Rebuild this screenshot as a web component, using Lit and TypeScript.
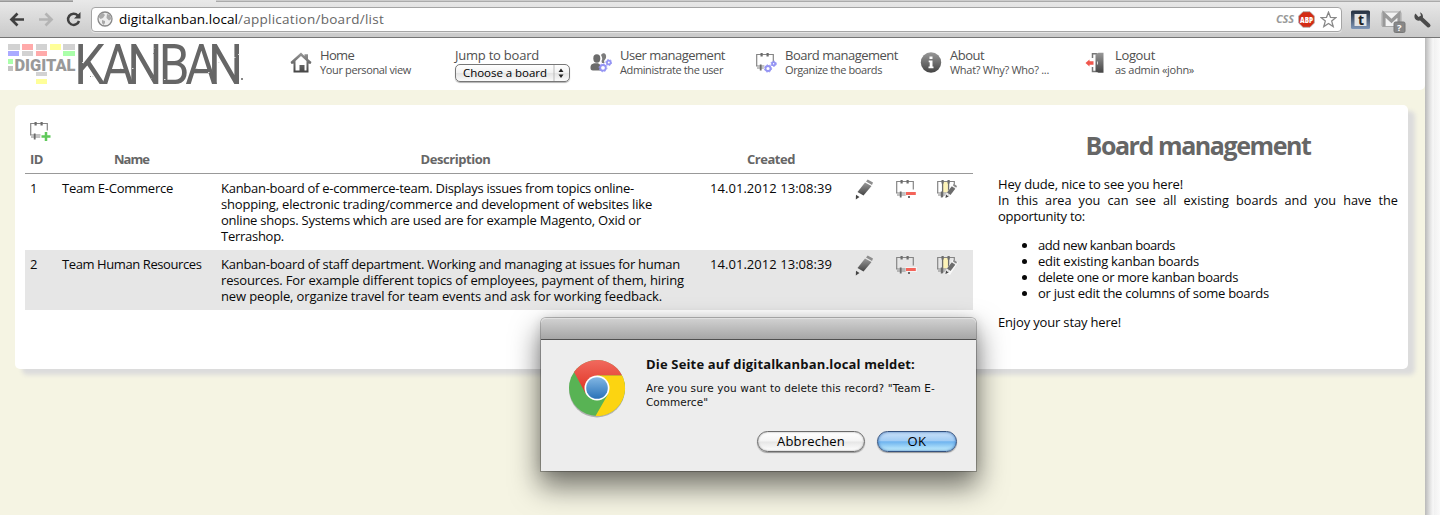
import { LitElement, html, svg, css, nothing } from "lit";
import { customElement, property } from "lit/decorators.js";

/** One line of text, tracked so that it fills a given measure. */
@customElement("fit-line")
class FitLine extends LitElement {
  @property({ type: Number }) w = 0;
  @property() text = "";
  static styles = css`
    :host { display: inline-block; white-space: pre; }
    span { display: inline-block; }
  `;
  updated() {
    const el = this.renderRoot.querySelector("span") as HTMLElement;
    el.style.letterSpacing = "0px";
    const natural = el.getBoundingClientRect().width;
    if (this.w) el.style.letterSpacing = (this.w - natural) / this.text.length + "px";
  }
  render() {
    return html`<span>${this.text}</span>`;
  }
}

const line = (text: string, w: number) => html`<fit-line .text=${text} .w=${w}></fit-line>`;

const boardBase = svg`
  <path d="M1.700 14.500V3.500H18.300V11.500M1 15H12.500M2 17H11.500" fill="none" stroke="#858585" stroke-width="1.200"/>
  <path d="M5.500 2h2.200v3.600H5.500zM11.500 2h2.200v3.600h-2.200zM4.800 13.500h1.800v6H4.800z" fill="#6c6c6c"/>`;

const gear = (x: number, y: number, r: number) => svg`
  <circle cx=${x} cy=${y} r=${r} fill="#fff" stroke="#9494f4" stroke-width="1.800"/>
  <circle cx=${x} cy=${y} r=${r + 1.1} fill="none" stroke="#9494f4" stroke-width="1" stroke-dasharray="1.500 1.500"/>`;

const gradient = svg`<defs><linearGradient id="g" x1="0" y1="0" x2="0" y2="1">
  <stop offset="0" stop-color="#999"/><stop offset="1" stop-color="#444"/></linearGradient></defs>`;

const icons: Record<string, unknown> = {
  home: svg`${gradient}<path fill="url(#g)" fill-rule="evenodd" d="M11 0.500 14.500 4V2.300H18V7L21.500 10 20.500 12 18.500 11.500V20.500H3.500V11.500L1.500 12 .5 10ZM11 4 5.500 9V18.500H9.500V13H14.500V18.500H16.500V9Z"/>`,
  user: svg`<ellipse cx="6.800" cy="6.500" rx="3.500" ry="4.200" fill="#6c6c6c"/><path d="M.5 16C.5 12.500 2 11.500 6 11.300 10 11 11 13 11 18.500H3C1 18.500 .5 17.500 .5 16Z" fill="#6c6c6c"/>
    <path d="M11 3C13 0 17 1 16 6L14 9 14.500 11H12L11.500 9C13 7 12 5 11 3Z" fill="#7c7c7c"/>${gear(13, 15.8, 2.8)}${gear(18.800, 10.5, 1.9)}`,
  board: svg`<g transform="translate(0 -1)">${boardBase}</g><circle cx="13.500" cy="16" r="4.800" fill="#fff"/>${gear(13, 16.500, 2.500)}${gear(18.600, 11.800, 1.600)}`,
  about: svg`${gradient}<circle cx="11" cy="10.500" r="10.200" fill="url(#g)"/><path d="M9.500 4.500h3V7h-3zM8.700 8.500h3.800v6h1v1.700H8.500v-1.700h1.200v-4.200h-1z" fill="#fff"/>`,
  logout: svg`${gradient}<path d="M7.500 6V1.800H12M7.500 15V19.500H12" fill="none" stroke="#777" stroke-width="1.500"/>
    <path d="M10.500 2 13.500 .8H18.500V20.800H13.500L10.500 19.500Z" fill="url(#g)"/><path d="M12.500 9.500v3" stroke="#ddd"/><path d="M.5 11 4.500 7.500V9.300H8.500V12.700H4.500V14.500Z" fill="#f0564c"/>`,
  add: svg`${boardBase}<path d="M16.500 10.500V21.500M11.500 16.500H22" stroke="#fff" stroke-width="5"/><path d="M17 12V21M12.500 16.500H21.500" stroke="#5fc85a" stroke-width="2.500"/>`,
  edit: svg`${gradient}<path d="M12 4.500 18.500 8 10.500 17.500 4.500 14Z" fill="url(#g)"/><path d="M13 3.500 14.700 1.500 20 4.500 19 7Z" fill="#8e8e8e"/><path d="M3 16.800 6.500 19 2.800 21.500Z" fill="#444"/>`,
  remove: svg`${boardBase}<rect x="10.500" y="13" width="11.500" height="5" fill="#fff" opacity=".6"/><rect x="11" y="14" width="9.800" height="3" fill="#f4645a"/><path d="M13 18h2v2h-2z" fill="#6c6c6c"/>`,
  columns: svg`<rect x="7" y="4" width="6" height="10.500" fill="#fdf3b8"/>${boardBase}<path d="M6.600 4V19M12.600 4V19" stroke="#6c6c6c" stroke-width="1.300"/>
    <path d="M17 5.500 22 8.500 14 21 8.500 18Z" fill="#fff" opacity=".75"/><path d="M15.800 8.300 19.300 10.800 14.500 17 11 14.500Z" fill="#6c6c6c"/><path d="M16.800 7.300 17.800 5.800 21 8 20.200 9.800Z" fill="#888"/><path d="M10 16.500 12.500 18.500 9.500 20Z" fill="#444"/>`,
};
const icon = (name: string) => html`<svg class="icon" width="22" height="22" viewBox="0 0 22 22">${icons[name]}</svg>`;

const nav = [
  { icon: "home", title: ["Home", 34], sub: ["Your personal view", 91] },
  { icon: "", title: ["Jump to board", 84], sub: null },
  { icon: "user", title: ["User management", 105], sub: ["Administrate the user", 103] },
  { icon: "board", title: ["Board management", 113], sub: ["Organize the boards", 97] },
  { icon: "about", title: ["About", 34], sub: ["What? Why? Who? ...", 99] },
  { icon: "logout", title: ["Logout", 40], sub: ["as admin «john»", 79] },
] as any[];

const rows = [
  {
    id: "1", name: ["Team E-Commerce", 111],
    text: [
      ["Kanban-board of e-commerce-team. Displays issues from topics online-", 413],
      ["shopping, electronic trading/commerce and development of websites like", 431],
      ["online shops. Systems which are used are for example Magento, Oxid or", 420],
      ["Terrashop.", 63],
    ],
  },
  {
    id: "2", name: ["Team Human Resources", 139.5],
    text: [
      ["Kanban-board of staff department. Working and managing at issues for human", 459],
      ["resources. For example different topics of employees, payment of them, hiring", 463],
      ["new people, organize travel for team events and ask for working feedback.", 441],
    ],
  },
] as any[];

@customElement("browser-bar")
class BrowserBar extends LitElement {
  static styles = css`
    :host { display: block; font-family: "Open Sans", sans-serif; }
    .bar { height: 38px; box-sizing: border-box; border-bottom: 1px solid #757575; display: flex; align-items: center;
      background: linear-gradient(#e9e9e9, #cacaca); padding-left: 8px; position: relative; }
    .tabs { position: absolute; top: 0; height: 2px; background: #b5b5b5; border-bottom: 1px solid #999; box-sizing: border-box; }
    .left { left: 0; width: 73px; }
    .right { left: 216px; right: 0; background: #ccc; border-color: #aaa; }
    .field { margin-left: 3px; margin-top: 1px; width: 1251px; height: 25px; box-sizing: border-box; border: 1px solid #a5a5a5; border-radius: 4px;
      background: #fff; box-shadow: 0 1px 0 #e4e4e4; display: flex; align-items: center; padding: 0 4px 0 5px; }
    .url { font-size: 13.5px; margin-left: 6px; color: #666; flex: 1; line-height: 20px; }
    .host { color: #000; }
    .tag { font: italic bold 11px/16px "Open Sans", sans-serif; color: #999; margin-right: 4px; }
    svg { flex: none; }
    .star { margin-left: 5px; }
    .plugins { display: flex; margin-left: 8px; }
  `;
  render() {
    return html`<div class="bar">
      <div class="tabs left"></div><div class="tabs right"></div>
      <svg width="80" height="38" viewBox="8 0 80 38" fill="none">
        <path d="M24 19.500H12.500M17.500 13.500 11.500 19.500 17.500 25.500" stroke="#404040" stroke-width="2.700"/>
        <path d="M39 19.500H51M45.500 13.500 51.500 19.500 45.500 25.500" stroke="#b4b4b4" stroke-width="2.700"/>
        <path d="M77.800 15.500A5.600 5.600 0 1 0 79 21" stroke="#404040" stroke-width="2.500"/><path d="M80.500 12V18.500H74Z" fill="#404040"/>
      </svg>
      <div class="field">
        <svg width="16" height="16" viewBox="0 0 16 16"><circle cx="8" cy="8" r="7" fill="#eee" stroke="#888" stroke-width="1.300"/>
          <path d="M3 3 6 2 8 4 6 7 3.500 8 1.500 6ZM5 9 8 10 8 12 6.500 14 5 12ZM10 3 13 4 14.500 8 12 9.500 9.500 7Z" fill="#aaa"/></svg>
        <div class="url"><span class="host">${line("digitalkanban.local", 119)}</span>${line("/application/board/list", 146)}</div>
        <span class="tag">${line("CSS", 18)}</span>
        <svg width="17" height="17" viewBox="0 0 17 17"><path d="M5 .7h7L16.300 5v7L12 16.300H5L.7 12V5Z" fill="#d32b15" stroke="#aaa" stroke-width=".8"/>
          <text x="2" y="12" font-size="8.500" font-weight="800" font-family="Open Sans" textLength="13" lengthAdjust="spacingAndGlyphs" fill="#fff">ABP</text></svg>
        <svg class="star" width="17" height="17" viewBox="0 0 17 17"><path d="M8.500 1.200 10.500 6.300 16 6.600 11.700 10.100 13.200 15.600 8.500 12.500 3.800 15.600 5.300 10.100 1 6.600 6.500 6.300Z" fill="#fff" stroke="#888" stroke-width="1.300"/></svg>
      </div>
      <svg class="plugins" width="90" height="38" viewBox="1350 0 90 38">
        <defs><linearGradient id="t" x2="0" y2="1"><stop stop-color="#222d3c"/><stop offset="1" stop-color="#7f97b8"/></linearGradient></defs>
        <rect x="1351" y="10.500" width="19" height="18.500" rx="1.500" fill="url(#t)"/><rect x="1354.500" y="14" width="12" height="12" fill="#e4e4e4"/>
        <text x="1358" y="24.500" font-family="Open Sans" font-weight="bold" font-size="14" fill="#222">t</text>
        <rect x="1382" y="12" width="19" height="14.500" rx="1" fill="#f2f2f2" stroke="#999" stroke-width=".8"/>
        <path d="M1384 26.500V14L1391.500 21 1399 14V26.500" fill="none" stroke="#999" stroke-width="3.200"/>
        <rect x="1394" y="22" width="11" height="10.500" rx="1.500" fill="#888" stroke="#777"/>
        <text x="1397" y="31" font-family="Open Sans" font-weight="bold" font-size="9.500" fill="#fff">?</text>
        <path d="M1421 18.500 1428.500 25.500" stroke="#4b4b4b" stroke-width="4" stroke-linecap="round"/>
        <path d="M1415.500 13.500A4.300 4.300 0 1 0 1420 12.300L1421 15.500 1418.500 17Z" fill="#4b4b4b"/>
      </svg>
    </div>`;
  }
}

@customElement("alert-dialog")
class AlertDialog extends LitElement {
  static styles = css`
    :host { display: block; font-family: "DejaVu Sans", sans-serif; color: #111; }
    .win { width: 435px; height: 153px; background: #ededed; border-radius: 5px 5px 0 0; box-shadow: 0 0 0 1px rgba(0,0,0,.25), 0 14px 28px 2px rgba(0,0,0,.52), 0 0 12px rgba(0,0,0,.12); }
    .title { height: 22px; box-sizing: border-box; border-radius: 5px 5px 0 0; border-bottom: 1px solid #505050; background: linear-gradient(#d2d2d2, #a6a6a6); box-shadow: inset 0 1px #e0e0e0; }
    .main { display: flex; padding: 16px 0 0 25px; height: 75px; gap: 18px; }
    .main svg { margin-top: 1px; }
    h2 { margin: 0; font-family: "Open Sans", sans-serif; font-size: 13px; font-weight: 700; line-height: 16px; height: 25px; }
    .msg { font-size: 10.5px; line-height: 14px; }
    .msg div { height: 14px; }
    .buttons { display: flex; gap: 12px; justify-content: flex-end; padding-right: 19px; }
    button { height: 21px; width: 108px; padding: 0; box-sizing: border-box; border: 1px solid #6b6b6b; border-radius: 11px; font: 13px/17px "Open Sans", sans-serif; color: #000;
      background: linear-gradient(#fff 0%, #f4f4f4 48%, #e6e6e6 52%, #fff 100%); box-shadow: 0 1px 1px rgba(0,0,0,.35), inset 0 0 2px #999; }
    .ok { width: 80px; border-color: #34527f; background: linear-gradient(#cbe1f8 0%, #a2cdf5 45%, #6fb4ef 52%, #c9f3ff 100%); box-shadow: 0 1px 1px rgba(0,0,0,.35), inset 0 0 3px #3b72b8; }
  `;
  render() {
    return html`<div class="win"><div class="title"></div>
      <div class="main">
        <svg width="62" height="62" viewBox="-31 -31 62 62">
          <defs><linearGradient id="r" x2="0" y2="1"><stop stop-color="#f16a5e"/><stop offset="1" stop-color="#df2f20"/></linearGradient>
          <linearGradient id="b" x2="0" y2="1"><stop stop-color="#82b7e4"/><stop offset="1" stop-color="#2a72b8"/></linearGradient></defs>
          <ellipse cy="1.500" rx="28" ry="28" fill="#000" opacity=".25"/>
          <circle r="28" fill="#58b354"/>
          <path d="M-23 -16A28 28 0 0 1 25.100 -12.500H0L-11 6.300Z" fill="url(#r)"/>
          <path d="M25.100 -12.500A28 28 0 0 1 -1.500 28L11 6.300 0 -12.500Z" fill="#fcd411"/>
          <circle r="12.500" fill="#fff"/><circle r="10.800" fill="url(#b)"/>
        </svg>
        <div class="copy"><h2>${line("Die Seite auf digitalkanban.local meldet:", 269)}</h2>
          <div class="msg"><div>${line('Are you sure you want to delete this record? "Team E-', 289)}</div><div>${line('Commerce"', 62)}</div></div></div>
      </div>
      <div class="buttons"><button>${line("Abbrechen", 68)}</button><button class="ok">${line("OK", 19)}</button></div>
    </div>`;
  }
}

@customElement("app-root")
class AppRoot extends LitElement {
  static styles = css`
    :host { display: block; width: 1440px; height: 515px; overflow: hidden; position: relative; font: 13px/16px "Open Sans", sans-serif; color: #080808; background: #fff; }
    .view { display: flex; height: 477px; }
    .page { width: 1425px; background: #f5f4e3; }
    .scroll { flex: 1; background: linear-gradient(90deg, #b9b9b9, #e4e4e4 35%, #f8f8f8 55%, #f1f1f1 60%, #fafafa); }
    header { height: 52px; background: #fff; border-radius: 0 0 5px 0; display: flex; }
    .logo { width: 290px; flex: none; overflow: visible; }
    .item { width: 165px; display: flex; color: #505050; }
    .jump { width: 135px; }
    .slot { width: 30px; flex: none; padding-top: 14px; }
    .slot svg { display: block; }
    .label { padding-top: 9px; }
    .label div { white-space: nowrap; height: 16px; }
    .label .sub { font-size: 11px; line-height: 16px; height: 14px; margin-top: -1px; }
    .label .select { width: 115px; height: 18px; box-sizing: border-box; border: 1px solid #777; border-radius: 5px; background: linear-gradient(#fff, #f1f1f1 50%, #e4e4e4 52%, #fafafa);
      box-shadow: 0 1px 1px rgba(0,0,0,.3); color: #000; display: flex; align-items: center; font: 500 11.500px/16px "Open Sans", sans-serif; margin-top: 1px; padding-left: 7px; }
    .select svg { margin-left: 6px; }
    .panel { margin: 15px 0 0 15px; width: 1393px; height: 264px; box-sizing: border-box; background: #fff; border-radius: 5px; box-shadow: 7px 6px 4px #dcdcdc; display: flex; padding: 15px 10px 0; }
    .list { width: 948px; }
    .tools { height: 25px; padding-left: 4px; }
    .tools svg { display: block; }
    .row { display: grid; grid-template-columns: 32px 149px 499px 132px 136px; padding: 6px 0; }
    .row > * { padding-left: 5px; }
    .head { font-weight: 700; color: #666; border-bottom: 1px solid #999; padding-bottom: 6px; }
    .head > * { padding-left: 0; text-align: center; }
    .head > :first-child { text-align: left; padding-left: 5px; }
    .even { background: #e6e6e6; }
    .row .desc { padding-left: 15px; }
    .desc div, p div { height: 16px; }
    .row .acts { padding-left: 16px; display: grid; grid-template-columns: 22px 22px 22px; column-gap: 19.500px; margin-top: -2px; height: 20px; }
    aside { width: 400px; margin-left: 25px; }
    h1 { margin: 9px 0 0; height: 47px; font-size: 25px; line-height: 32px; color: #666; text-align: center; }
    p { margin: 0; }
    .spread { text-align-last: justify; font-size: 12.700px; }
    ul { margin: 13px 0; padding-left: 40px; }
    li { height: 16px; }
    alert-dialog { position: absolute; left: 541px; top: 318px; }
  `;
  renderLogo() {
    const tiles = [
      [8, 44, 12, 6, "#d2d2d2"], [22, 44, 11, 6, "#ffaaaa"], [36, 44, 11, 6, "#d2d2d2"], [50, 44, 11, 6, "#ffff99"], [63, 44, 12, 6, "#d2d2d2"],
      [8, 51, 11, 5, "#aaaaff"], [22, 51, 11, 5, "#d2d2d2"], [36, 51, 11, 5, "#ffaaaa"], [63, 51, 12, 5, "#aaffaa"],
      [8, 59, 5, 5, "#aaffaa"], [8, 66, 5, 5, "#c4c4c4"], [36, 72, 11, 4, "#d2d2d2"], [36, 79, 11, 5, "#ffff99"],
    ];
    const specks = [[158, 60], [82, 62], [92, 76], [120, 68], [234, 57], [218, 62], [208, 72], [132, 68], [164, 79], [196, 68], [238, 54]];
    return html`<svg class="logo" width="290" height="52" viewBox="0 38 290 52">
      ${tiles.map(([x, y, w, h, c]) => svg`<rect x=${x} y=${y} width=${w} height=${h} fill=${c}/>`)}
      <text x="14.500" y="71" font-family="Roboto" font-weight="900" font-size="17" fill="#999" textLength="61" lengthAdjust="spacingAndGlyphs">DIGITAL</text>
      <text transform="translate(0 84) scale(.88 1)" x="84.500 115.500 144.500 180.500 210.500 236.500" y="0" font-family="Roboto" font-size="56" fill="#666">KANBAN</text>
      ${specks.map(([x, y]) => svg`<rect x=${x} y=${y} width="1.500" height="1" fill="#ddd"/>`)}
      <path d="M241 78h2v2h-2zM154 48h1v1h-1zM153 53h1v1h-1zM90 76h1v1h-1zM151 78h1v1h-1z" fill="#888"/>
    </svg>`;
  }
  render() {
    return html`<browser-bar></browser-bar>
      <div class="view"><div class="page">
        <header>${this.renderLogo()}
          ${nav.map((n) => html`<div class="item ${n.icon ? "" : "jump"}">${n.icon ? html`<div class="slot">${icon(n.icon)}</div>` : nothing}
            <div class="label"><div>${line(n.title[0], n.title[1])}</div>
            ${n.sub ? html`<div class="sub">${line(n.sub[0], n.sub[1])}</div>`
              : html`<div class="select">${line("Choose a board", 84)}<svg width="16" height="16" viewBox="0 0 16 16"><path d="M1 0V16" stroke="#bbb"/><path d="M5.500 7 8 3.500 10.500 7ZM5.500 9.500H10.500L8 13Z" fill="#222"/></svg></div>`}
            </div></div>`)}
        </header>
        <div class="panel">
          <div class="list">
            <div class="tools">${icon("add")}</div>
            <div class="row head"><div>${line("ID", 13)}</div><div>${line("Name", 35)}</div><div>${line("Description", 70)}</div><div>${line("Created", 48)}</div></div>
            ${rows.map((r, i) => html`<div class="row ${i % 2 ? "even" : ""}"><div>${r.id}</div><div>${line(r.name[0], r.name[1])}</div>
              <div class="desc">${r.text.map((t: any) => html`<div>${line(t[0], t[1])}</div>`)}</div>
              <div>${line("14.01.2012 13:08:39", 122)}</div>
              <div class="acts">${icon("edit")}${icon("remove")}${icon("columns")}</div></div>`)}
          </div>
          <aside>
            <h1>${line("Board management", 225)}</h1>
            <p><div>${line("Hey dude, nice to see you here!", 185)}</div>
            <div class="spread">In this area you can see all existing boards and you have the</div>
            <div>${line("opportunity to:", 87)}</div></p>
            <ul><li>${line("add new kanban boards", 137)}</li><li>${line("edit existing kanban boards", 161)}</li>
            <li>${line("delete one or more kanban boards", 200)}</li><li>${line("or just edit the columns of some boards", 231)}</li></ul>
            <p>${line("Enjoy your stay here!", 123)}</p>
          </aside>
        </div>
      </div><div class="scroll"></div></div>
      <alert-dialog></alert-dialog>`;
  }
}
